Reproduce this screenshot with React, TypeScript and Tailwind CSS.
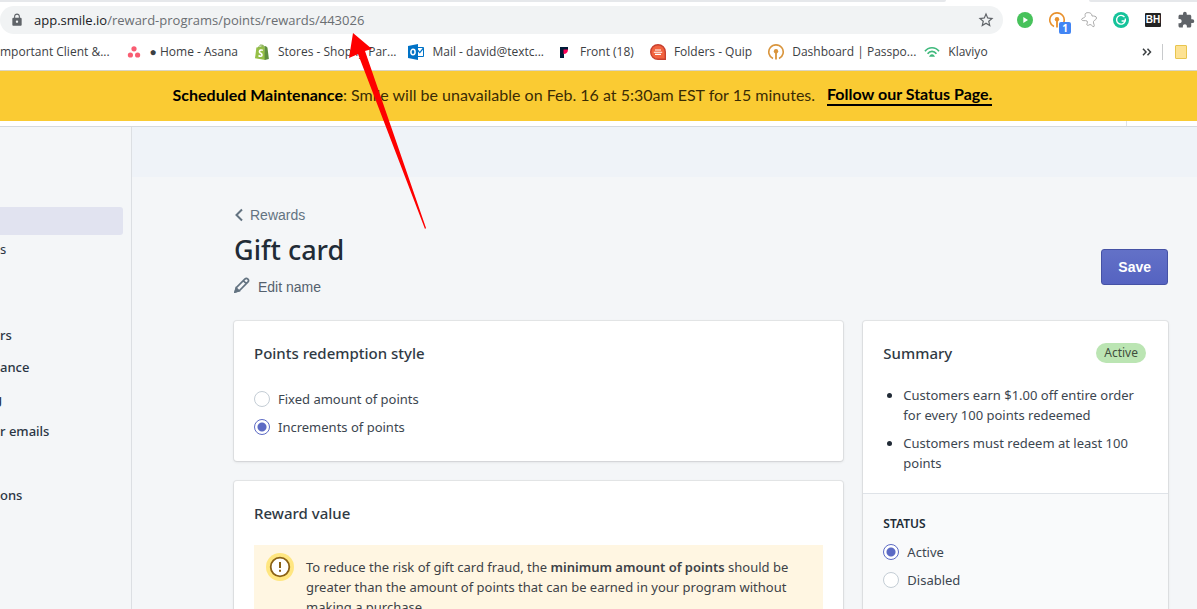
import type { ReactNode } from "react";
import { MdExtension, MdLock, MdStarBorder } from "react-icons/md";

type BookmarkProps = {
  label: string;
  icon: ReactNode;
  className?: string;
};

function Bookmark({ label, icon, className = "" }: BookmarkProps) {
  return (
    <a href="#" className={`flex shrink-0 items-center gap-2 whitespace-nowrap ${className}`}>
      <span className="flex w-4 justify-center">{icon}</span>
      <span>{label}</span>
    </a>
  );
}

function AsanaIcon() {
  return (
    <svg viewBox="0 0 16 16" className="size-4 shrink-0" fill="#f95d72">
      <circle cx="8" cy="4.8" r="2.6" />
      <circle cx="4.4" cy="11" r="2.6" />
      <circle cx="11.6" cy="11" r="2.6" />
    </svg>
  );
}

function ShopifyIcon() {
  return (
    <svg viewBox="0 0 16 16" className="size-4 shrink-0">
      <path d="M2.4 3.6 10.5 2l.9 14L1 14.2z" fill="#95bf47" />
      <path d="m10.5 2 1.5.3 1.5 1.4 1.4 11.4-4.2.9z" fill="#5e8e3e" />
      <path d="M4.6 3.8C5 1.4 6.8 .4 7.9 1.1 8.7 1.5 8.9 2.4 8.9 3.1M6.9 3.3C7.3 1.5 8.9 .2 9.9 2.2" fill="none" stroke="#7aa640" strokeWidth=".9" />
      <path d="M8.9 6.4C7.4 5.6 5.4 6 5.4 7.7 5.4 9.3 8 9.3 8 10.9 8 12.5 5.9 12.5 4.5 11.5" fill="none" stroke="#fff" strokeWidth="1.6" />
    </svg>
  );
}

function OutlookIcon() {
  return (
    <svg viewBox="0 0 16 16" className="size-4 shrink-0">
      <path d="M9 3.5h6.5v9H9z" fill="#fff" stroke="#0072c6" />
      <path d="m9.5 6 2.3 2.6L15.5 4" fill="none" stroke="#0072c6" strokeWidth="1.2" />
      <path d="M0 2 10 0v16L0 14z" fill="#0072c6" />
      <ellipse cx="5" cy="8" rx="2.1" ry="2.7" fill="none" stroke="#fff" strokeWidth="1.5" />
    </svg>
  );
}

function FrontIcon() {
  return (
    <svg viewBox="0 0 16 16" className="size-4 shrink-0">
      <path d="M4 3h8v3H8v8H4z" fill="#001b38" />
      <path d="M7.5 5.5H12c0 2.8-1.6 4.5-4.5 4.5z" fill="#ff0057" />
    </svg>
  );
}

function QuipIcon() {
  return (
    <svg viewBox="0 0 16 16" className="size-4 shrink-0">
      <path d="M8 .7a7.3 7.3 0 1 0 0 14.6h7.3V8A7.3 7.3 0 0 0 8 .7z" fill="#f2633f" stroke="#c8402f" strokeWidth="1.4" />
      <path d="M5 6h6M3.8 8.2h8.4M5 10.4h6" stroke="#fff" strokeWidth="1.1" />
    </svg>
  );
}

function PassportIcon({ color }: { color: string }) {
  return (
    <svg viewBox="0 0 16 16" className="size-4 shrink-0">
      <path d="M5 14.6A7.2 7.2 0 1 1 11 14.6" fill="none" stroke={color} strokeWidth="1.6" />
      <circle cx="8" cy="7.3" r="2.2" fill={color} />
      <path d="M7.1 8h1.8v7.5H7.1z" fill={color} />
    </svg>
  );
}

function KlaviyoIcon() {
  return (
    <svg viewBox="0 0 16 16" className="size-4 shrink-0" fill="none" stroke="#3fb97c" strokeWidth="1.7">
      <path d="M1 7.2C4.500 2.6 11.500 2.6 15 7.2" />
      <path d="M3.6 9.7C6 6.5 10 6.5 12.4 9.7" />
      <path d="M6.5 12C7.3 10.7 8.7 10.7 9.5 12z" fill="#3fb97c" />
    </svg>
  );
}

function Extensions() {
  return (
    <div className="flex shrink-0 items-center gap-4">
      <svg viewBox="0 0 16 16" className="size-4">
        <circle cx="8" cy="8" r="8" fill="#47c25b" />
        <path d="M6.300 5v6L11 8z" fill="#fff" />
      </svg>
      <div className="relative">
        <PassportIcon color="#e8912d" />
        <span className="absolute top-2.5 left-2.5 flex size-3 items-center justify-center rounded-[2px] bg-[#4285f4] text-[10px] font-bold text-white">
          1
        </span>
      </div>
      <svg viewBox="0 0 16 16" className="size-4" fill="#fff" stroke="#a2a2a2" strokeWidth=".9">
        <path d="M5 1C8 0 11 1 11 4C13 4 15.5 4 15.5 6C15.5 8 13 8 12.5 9.5C12 11.5 14 13 13 14.5C11.5 15.5 11 12.5 9 12.5C7.5 13 7 14 6 13C5 12 7.5 10.5 6 9C4.5 8 1 9.5 .6 7.5C.4 6 4 6 4.2 4.5C4.3 3 3.5 2 5 1z" />
      </svg>
      <svg viewBox="0 0 16 16" className="size-4">
        <circle cx="8" cy="8" r="8" fill="#15c39a" />
        <path d="M11.5 5.1A4.4 4.4 0 1 0 12.2 9H8.6M12.3 6.5V9.3" fill="none" stroke="#fff" strokeWidth="1.4" />
      </svg>
      <span className="flex h-3.5 w-4 items-center justify-center rounded-[1px] bg-[#222] font-['Liberation_Sans',sans-serif] text-[10px] font-bold text-white">
        BH
      </span>
      <MdExtension className="size-[18px] text-[#5f6368]" />
    </div>
  );
}

function BrowserBar() {
  return (
    <header className="shrink-0 border-b border-[#d9d5c5] bg-white font-['Open_Sans',sans-serif] text-[#3c4043]">
      <div className="flex h-0.5 justify-between">
        <div className="w-[79%] rounded-br bg-[#e6e8eb]" />
        <div className="w-[9%] rounded-bl bg-[#e6e8eb]" />
      </div>
      <div className="mt-1 flex items-center gap-3.5 pr-0.5">
        <div className="flex h-7 flex-1 items-center rounded-full bg-[#f1f3f4] pr-2 pl-2.5 text-[13px]">
          <MdLock className="size-3.5 text-[#5f6368]" />
          <p className="ml-2.5 flex-1 text-[#6a6e72]">
            <span className="text-[#202124]">app.smile.io</span>/reward-programs/points/rewards/443026
          </p>
          <MdStarBorder className="size-[18px] text-[#5f6368]" />
        </div>
        <Extensions />
      </div>
      <nav className="flex h-9 items-center text-[12px]">
        <a href="#" className="shrink-0 whitespace-nowrap">
          mportant Client &amp;...
        </a>
        <Bookmark className="ml-4" icon={<AsanaIcon />} label="● Home - Asana" />
        <Bookmark className="ml-4" icon={<ShopifyIcon />} label="Stores - Shopify Par..." />
        <Bookmark className="ml-3" icon={<OutlookIcon />} label="Mail - david@textc..." />
        <Bookmark className="ml-3" icon={<FrontIcon />} label="Front (18)" />
        <Bookmark className="ml-4" icon={<QuipIcon />} label="Folders - Quip" />
        <Bookmark className="ml-4" icon={<PassportIcon color="#d9953d" />} label="Dashboard | Passpo..." />
        <Bookmark className="ml-2" icon={<KlaviyoIcon />} label="Klaviyo" />
        <div className="ml-auto flex shrink-0 items-center">
          <button type="button" aria-label="More bookmarks">
            <svg viewBox="0 0 10 10" className="size-2.5" fill="none" stroke="#3c4043" strokeWidth="1.5">
              <path d="m1 1.8 3 3.2-3 3.2M5.5 1.8l3 3.2-3 3.2" />
            </svg>
          </button>
          <span className="mr-3 ml-2.5 h-4 w-px bg-[#c8cacc]" />
          <span className="mr-2.5 h-3.5 w-3 rounded-[1px] border border-[#e8c54e] bg-[#fde293]" />
        </div>
      </nav>
    </header>
  );
}

function MaintenanceBanner() {
  return (
    <div className="flex h-[50px] shrink-0 items-center justify-center bg-[#facb33] pr-8 pb-0.5 font-['Lato',sans-serif] text-[16px] text-[#3a2c05]">
      <p>
        <strong className="font-bold text-black">Scheduled Maintenance</strong>: Smile will be unavailable on Feb. 16 at
        5:30am EST for 15 minutes.
      </p>
      <a href="#" className="ml-3 border-b-2 border-black font-bold text-black">
        Follow our Status Page.
      </a>
    </div>
  );
}

function Sidebar() {
  return (
    <aside className="w-[132px] shrink-0 overflow-hidden border-r border-[#dcdfe3] pt-20 text-[13px] font-medium text-[#2b3544]">
      <div className="mr-2 h-7 rounded-r-[3px] bg-[#e1e3f0]" />
      <ul>
        <li className="h-[84px] pt-1 leading-5 font-normal">s</li>
        <li className="h-8 leading-8">rs</li>
        <li className="h-8 leading-8">ance</li>
        <li className="-ml-1.5 h-8 leading-8">g</li>
        <li className="h-16 leading-8">r emails</li>
        <li className="h-8 leading-8">ons</li>
      </ul>
    </aside>
  );
}

type RadioProps = {
  name: string;
  label: string;
  defaultChecked?: boolean;
};

function Radio({ name, label, defaultChecked }: RadioProps) {
  return (
    <label className="flex h-7 items-center gap-2">
      <input
        type="radio"
        name={name}
        defaultChecked={defaultChecked}
        className="size-4 shrink-0 appearance-none rounded-full border border-[#c4cdd5] bg-white checked:border-[#5c6ac4] checked:bg-[radial-gradient(circle,#5c6ac4_4px,white_5px)]"
      />
      <span>{label}</span>
    </label>
  );
}

function Card({ children }: { children: ReactNode }) {
  return (
    <section className="rounded-[3px] bg-white shadow-[0_0_0_1px_rgba(63,63,68,0.08),0_1px_3px_0_rgba(63,63,68,0.15)]">
      {children}
    </section>
  );
}

function CardTitle({ children }: { children: ReactNode }) {
  return <h2 className="text-[15px] leading-6 font-medium text-[#303a44]">{children}</h2>;
}

function PageHeader() {
  return (
    <div className="flex items-end justify-between">
      <div className="font-['Liberation_Sans',sans-serif] text-[14px] leading-5 text-[#637381]">
        <a href="#" className="flex items-center gap-1.5">
          <svg viewBox="0 0 10 14" className="h-3.5 w-2.5" fill="none" stroke="currentColor" strokeWidth="2">
            <path d="M8 1.5 2.5 7 8 12.5" />
          </svg>
          Rewards
        </a>
        <h1 className="mt-[5px] font-['Noto_Sans',sans-serif] text-[27px] leading-10 font-medium text-[#212b36]">Gift card</h1>
        <button type="button" className="mt-[7px] flex items-start gap-2 text-[#54616e]">
          <svg viewBox="0 0 16 16" className="size-4" fill="none" stroke="#637381" strokeWidth="1.7">
            <path d="M1.3 14.7 2.5 10.5 10.8 2.2Q12.3 .7 13.9 2.1 15.3 3.7 13.8 5.2L5.5 13.5zM9.3 3.7 12.3 6.7" />
            <path d="M1 15l1.2-4L5 13.8z" fill="#637381" />
          </svg>
          Edit name
        </button>
      </div>
      <button
        type="button"
        className="mb-3 h-9 rounded-[3px] border border-[#4552a5] bg-linear-to-b from-[#6371c7] to-[#5563c1] px-4 font-['Liberation_Sans',sans-serif] text-[14px] font-bold text-white"
      >
        Save
      </button>
    </div>
  );
}

function FraudWarning() {
  return (
    <div className="mt-5 flex gap-3 bg-[#fff6e2] p-3 pr-6 text-[#3d4247]">
      <svg viewBox="0 0 28 28" className="-mt-1 size-7 shrink-0">
        <circle cx="14" cy="14" r="14" fill="#ffe680" />
        <circle cx="14" cy="14" r="9.3" fill="#fff" stroke="#8a6116" strokeWidth="1.8" />
        <path d="M13 9h2v6h-2zM13 16.8h2v2h-2z" fill="#8a6116" />
      </svg>
      <p>
        To reduce the risk of gift card fraud, the <strong className="font-semibold">minimum amount of points</strong> should
        be greater than the amount of points that can be earned in your program without making a purchase.
      </p>
    </div>
  );
}

function SummaryCard() {
  return (
    <Card>
      <div className="p-5">
        <div className="flex items-center justify-between">
          <CardTitle>Summary</CardTitle>
          <span className="mr-0.5 rounded-full bg-[#bbe5b3] px-2 text-[12px] leading-5 text-[#414f3e]">Active</span>
        </div>
        <ul className="mt-5 list-disc space-y-2 pl-5 marker:text-[#212b36]">
          <li>Customers earn $1.00 off entire order for every 100 points redeemed</li>
          <li>Customers must redeem at least 100 points</li>
        </ul>
      </div>
      <fieldset className="border-t border-[#dfe3e8] bg-[#f9fafb] px-5 pt-5 pb-20">
        <legend className="float-left mb-1 w-full text-[12px] leading-5 font-semibold text-[#212b36]">STATUS</legend>
        <div className="clear-both">
          <Radio name="status" label="Active" defaultChecked />
          <Radio name="status" label="Disabled" />
        </div>
      </fieldset>
    </Card>
  );
}

export default function App() {
  return (
    <div className="relative flex h-screen flex-col overflow-hidden bg-[#f4f6f8] font-['Noto_Sans',sans-serif] text-[13px] leading-5 text-[#3c4650]">
      <BrowserBar />
      <MaintenanceBanner />
      <div className="flex h-1.5 shrink-0 justify-end border-b border-[#d5d9de] bg-white">
        <span className="mr-[70px] w-px bg-[#dfe3e8]" />
      </div>
      <div className="flex flex-1">
        <Sidebar />
        <main className="min-w-0 flex-1">
          <div className="h-[50px] bg-[#eff3f8]" />
          <div className="pt-7 pr-[29px] pl-[102px]">
            <PageHeader />
            <div className="mt-6 grid grid-cols-[2fr_1fr] items-start gap-5">
              <div className="space-y-5">
                <Card>
                  <div className="p-5">
                    <CardTitle>Points redemption style</CardTitle>
                    <div className="mt-5">
                      <Radio name="redemption" label="Fixed amount of points" />
                      <Radio name="redemption" label="Increments of points" defaultChecked />
                    </div>
                  </div>
                </Card>
                <Card>
                  <div className="p-5">
                    <CardTitle>Reward value</CardTitle>
                    <FraudWarning />
                  </div>
                </Card>
              </div>
              <SummaryCard />
            </div>
          </div>
        </main>
      </div>
      <svg viewBox="0 0 80 200" className="pointer-events-none absolute top-8 left-[348px] h-[200px] w-20" fill="#fe0000">
        <path d="M5 1 1 26 10 22 77 197 78 196 17 19 24 17z" />
      </svg>
    </div>
  );
}
